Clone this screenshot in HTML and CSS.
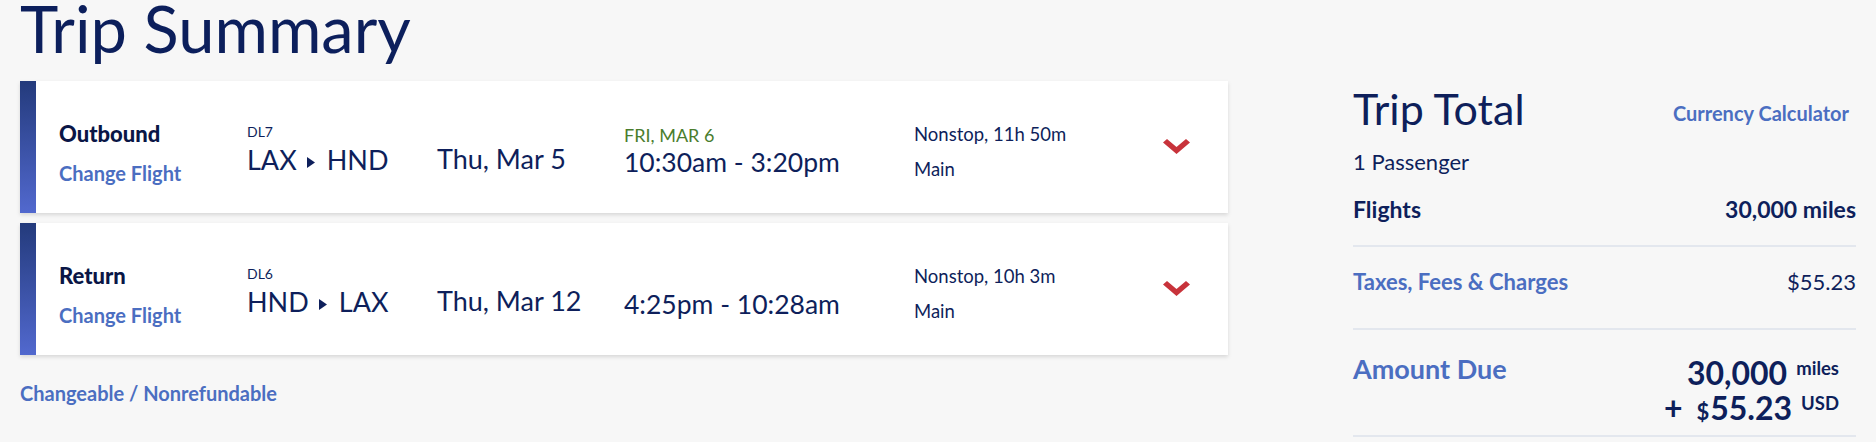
FILE: index.html
```html
<!DOCTYPE html>
<html lang="en">
<head>
    <meta charset="UTF-8">
    <meta name="viewport" content="width=device-width, initial-scale=1.0">
    <title>Trip Summary</title>
    <link rel="stylesheet" href="styles.css">
</head>
<body>

    <h1 class="page-title">Trip Summary</h1>

    <div class="summary">
        <div class="trip">
            <div class="leg">
                <div class="leg-name">
                    <div class="leg-type">Outbound</div>
                    <a href="#" class="link change-link">Change Flight</a>
                </div>
                <div class="leg-flight">
                    <div class="flight-no">DL7</div>
                    <div class="route">LAX<svg class="route-arrow" width="8" height="11" viewBox="0 0 8 11"><path d="M0 0 L8 5.5 L0 11 Z"/></svg>HND</div>
                </div>
                <div class="leg-date">Thu, Mar 5</div>
                <div class="leg-time">
                    <div class="arrive-note">FRI, MAR 6</div>
                    <div class="times">10:30am - 3:20pm</div>
                </div>
                <div class="leg-info">
                    <div>Nonstop, 11h 50m</div>
                    <div class="cabin">Main</div>
                </div>
                <button class="toggle" type="button">
                    <svg width="27" height="15" viewBox="0 0 27 15"><path d="M0 3.5 L4 0 L13.5 8 L23 0 L27 3.5 L13.5 15 Z"/></svg>
                </button>
            </div>

            <div class="leg">
                <div class="leg-name">
                    <div class="leg-type">Return</div>
                    <a href="#" class="link change-link">Change Flight</a>
                </div>
                <div class="leg-flight">
                    <div class="flight-no">DL6</div>
                    <div class="route">HND<svg class="route-arrow" width="8" height="11" viewBox="0 0 8 11"><path d="M0 0 L8 5.5 L0 11 Z"/></svg>LAX</div>
                </div>
                <div class="leg-date">Thu, Mar 12</div>
                <div class="leg-time">
                    <div class="arrive-note"></div>
                    <div class="times">4:25pm - 10:28am</div>
                </div>
                <div class="leg-info">
                    <div>Nonstop, 10h 3m</div>
                    <div class="cabin">Main</div>
                </div>
                <button class="toggle" type="button">
                    <svg width="27" height="15" viewBox="0 0 27 15"><path d="M0 3.5 L4 0 L13.5 8 L23 0 L27 3.5 L13.5 15 Z"/></svg>
                </button>
            </div>

            <a href="#" class="link fare-link">Changeable / Nonrefundable</a>
        </div>

        <aside class="total">
            <div class="total-head">
                <h2 class="total-title">Trip Total</h2>
                <a href="#" class="link calc-link">Currency Calculator</a>
            </div>
            <p class="pax">1 Passenger</p>

            <div class="line line-flights">
                <span>Flights</span>
                <span>30,000 miles</span>
            </div>
            <div class="line line-taxes">
                <a href="#" class="link">Taxes, Fees &amp; Charges</a>
                <span>$55.23</span>
            </div>
            <div class="line line-due">
                <span class="due-label">Amount Due</span>
                <div class="due-amount">
                    <div class="due-line">30,000<span class="unit">miles</span></div>
                    <div class="due-line"><span class="plus">+</span><span class="currency">$</span>55.23<span class="unit">USD</span></div>
                </div>
            </div>
        </aside>
    </div>

</body>
</html>
```

FILE: styles.css
```css
body {
    margin: 0;
    padding: 0 20px;
    background: #f7f7f7;
    color: #0e1f5b;
    font-family: Lato, "Open Sans", sans-serif;
    line-height: 1.2;
}
.link {
    color: #4b6ec1;
    font-weight: 700;
    text-decoration: none;
}
.page-title {
    margin: 0 0 25px;
    font-size: 65px;
    font-weight: 400;
    line-height: 56px;
    color: #0c1f5c;
}
.summary {
    display: flex;
    align-items: flex-start;
    gap: 125px;
}
.trip {
    width: 1208px;
}
.total {
    width: 503px;
}

/* flight cards */
.leg {
    display: flex;
    align-items: flex-start;
    box-sizing: border-box;
    height: 132px;
    margin-bottom: 10px;
    padding: 40px 0 0 23px;
    background: #fff;
    border-left: 16px solid #3b55a6;
    border-image: linear-gradient(#233a7b, #5269cf) 1;
    box-shadow: 0 2px 4px rgba(0, 0, 0, 0.13);
}
.leg-name {
    width: 188px;
}
.leg-type {
    font-size: 22px;
    font-weight: 900;
    color: #0a1646;
}
.change-link {
    display: block;
    margin-top: 14px;
    font-size: 20px;
}
.leg-flight {
    width: 190px;
    margin-top: 3px;
}
.flight-no {
    font-size: 14px;
}
.route {
    margin-top: 3px;
    font-size: 27px;
}
.route-arrow {
    margin: 0 12px 0 10px;
    vertical-align: 2px;
    fill: #0e1f5b;
}
.leg-date {
    width: 187px;
    margin-top: 22px;
    font-size: 27px;
}
.leg-time {
    width: 290px;
    margin-top: 4px;
}
.arrive-note {
    height: 22px;
    font-size: 18px;
    color: #4a7d2d;
}
.times {
    font-size: 26.5px;
}
.leg-info {
    width: 249px;
    margin-top: 2px;
    font-size: 18.5px;
}
.cabin {
    margin-top: 13px;
}
.toggle {
    margin-top: 18px;
    padding: 0;
    border: none;
    background: none;
    cursor: pointer;
    line-height: 0;
}
.toggle svg {
    fill: #c8333b;
}
.fare-link {
    display: block;
    margin-top: 26px;
    font-size: 20px;
}

/* trip total */
.total-head {
    display: flex;
    justify-content: space-between;
    align-items: flex-start;
    padding: 2px 7px 0 0;
}
.total-title {
    margin: 0;
    font-size: 43px;
    font-weight: 400;
}
.calc-link {
    margin-top: 18px;
    font-size: 20px;
}
.pax {
    margin: 14px 0 0;
    font-size: 22px;
}
.line {
    display: flex;
    justify-content: space-between;
    align-items: flex-start;
    border-bottom: 2px solid #e3e7ee;
}
.line-flights {
    padding: 21px 0;
    font-size: 23px;
    font-weight: 700;
}
.line-taxes {
    padding: 22px 0 33px;
    font-size: 22px;
}
.line-due {
    padding: 23px 17px 10px 0;
}
.due-label {
    font-size: 27px;
    font-weight: 700;
    color: #4b6ec1;
}
.due-amount {
    margin-top: 2px;
    text-align: right;
    font-weight: 700;
}
.due-line {
    font-size: 32px;
    line-height: 35px;
}
.unit {
    margin-left: 9px;
    font-size: 18.5px;
    line-height: 1;
    vertical-align: 10px;
}
.plus {
    margin-right: 14px;
}
.currency {
    margin-right: 1px;
    font-size: 22px;
    line-height: 1;
}
```
